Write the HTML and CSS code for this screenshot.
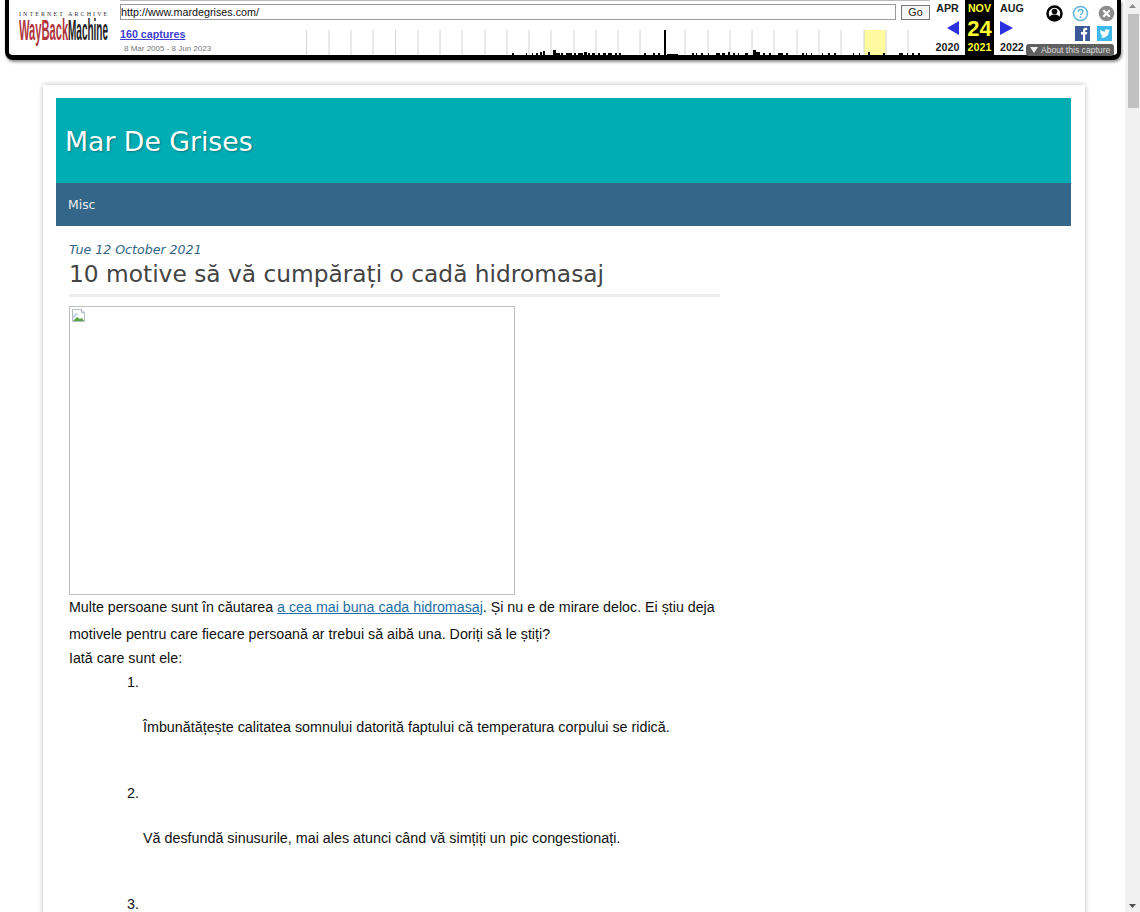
FILE: index.html
```html
<!DOCTYPE html>
<html lang="ro">
<head>
<meta charset="utf-8">
<title>Mar De Grises</title>
<link rel="stylesheet" href="styles.css">
</head>
<body>
<div class="window">
  <main class="page">
    <header class="wayback">
      <div class="brand">
        <div class="ia">INTERNET ARCHIVE</div>
        <div class="logo"><span class="logo-red">WayBack</span><span class="logo-black">Machine</span></div>
      </div>
      <div class="center">
        <div class="url-row">
          <div class="url">http://www.mardegrises.com/</div>
          <div class="go">Go</div>
        </div>
        <div class="graph-row">
          <div class="captures">
            <a class="cap-link">160 captures</a>
            <div class="cap-range">8 Mar 2005 - 8 Jun 2023</div>
          </div>
          <svg class="spark" width="630" height="27" viewBox="300 28 630 27">
            <rect class="spark-day" x="864" y="30" width="22" height="25"/>
            <path class="spark-tick" d="M306.500 30v25M329 30v25M351 30v25M373 30v25M395.500 30v25M418 30v25M440 30v25M462 30v25M485 30v25M507 30v25M529 30v25M551 30v25M574 30v25M596 30v25M618 30v25M640 30v25M685 30v25M708 30v25M730 30v25M752 30v25M774 30v25M797 30v25M819 30v25M841 30v25M864 30v25M886 30v25M908 30v25"/>
            <path class="spark-bar" d="M512 53h2v2h-2zM526 53h1v2h-1zM532 53h1v2h-1zM536 53h2v2h-2zM540 52h2v3h-2zM543 51h2v4h-2zM553 50h3v5h-3zM556 53h4v2h-4zM561 53h2v2h-2zM566 53h6v2h-6zM574 53h2v2h-2zM578 53h5v2h-5zM584 52h3v3h-3zM588 53h2v2h-2zM592 53h3v2h-3zM598 53h2v2h-2zM603 53h3v2h-3zM608 53h4v2h-4zM615 53h2v2h-2zM619 53h2v2h-2zM644 53h2v2h-2zM653 53h2v2h-2zM664 30h2v25h-2zM658 53h2v2h-2zM667 54h11v1h-11zM692 53h2v2h-2zM696 53h1v2h-1zM701 53h2v2h-2zM708 53h1v2h-1zM716 53h4v2h-4zM722 53h3v2h-3zM728 52h2v3h-2zM733 53h2v2h-2zM738 53h1v2h-1zM745 53h3v2h-3zM753 50h3v5h-3zM756 52h4v3h-4zM763 53h2v2h-2zM769 53h2v2h-2zM778 53h5v2h-5zM786 53h2v2h-2zM802 53h2v2h-2zM806 53h1v2h-1zM811 53h1v2h-1zM822 53h1v2h-1zM828 53h2v2h-2zM834 53h2v2h-2zM853 53h1v2h-1zM859 53h1v2h-1zM868 52h2v3h-2zM883 53h2v2h-2zM899 53h4v2h-4zM907 53h1v2h-1zM912 53h2v2h-2zM918 53h2v2h-2z"/>
          </svg>
        </div>
      </div>
      <nav class="months">
        <div class="mcol mprev">
          <div class="mname">APR</div>
          <div class="marrow"><svg width="12" height="14" viewBox="0 0 12 14"><path class="arrow" d="M12 0v14L0 7z"/></svg></div>
          <div class="myear">2020</div>
        </div>
        <div class="mcol mcur">
          <div class="mname">NOV</div>
          <div class="mday">24</div>
          <div class="myear">2021</div>
        </div>
        <div class="mcol mnext">
          <div class="mname">AUG</div>
          <div class="marrow"><svg width="13" height="14" viewBox="0 0 13 14"><path class="arrow" d="M0 0v14l13-7z"/></svg></div>
          <div class="myear">2022</div>
        </div>
      </nav>
      <div class="tools">
        <div class="tool-row tool-top">
          <svg width="17" height="17" viewBox="0 0 17 17"><circle cx="8.500" cy="8.500" r="7" fill="#fff" stroke="#000" stroke-width="2.500"/><circle cx="8.500" cy="6.500" r="2.800"/><path d="M3.500 13c.5-3 2.500-3.500 5-3.500s4.500.5 5 3.500c-1.500 1.500-3 2-5 2s-3.500-.5-5-2z"/></svg>
          <svg width="17" height="17" viewBox="0 0 17 17"><circle cx="8.500" cy="8.500" r="7" fill="#fff" stroke="#5fb6de" stroke-width="1.500"/><path d="M6.200 6.700c0-3 4.800-3 4.800 0 0 1.800-2.400 1.700-2.400 3.500" fill="none" stroke="#5fb6de" stroke-width="1.400"/><rect x="7.800" y="11.300" width="1.600" height="1.600" fill="#5fb6de"/></svg>
          <svg width="17" height="17" viewBox="0 0 17 17"><circle cx="8.500" cy="8.500" r="7.800" fill="#8c8c8c"/><path d="M5.300 5.300l6.400 6.400M11.700 5.300l-6.400 6.400" stroke="#fff" stroke-width="2.300"/></svg>
        </div>
        <div class="tool-row tool-social">
          <svg width="15" height="15" viewBox="0 0 15 15"><rect width="15" height="15" fill="#3b5998"/><path fill="#fff" d="M8 15V8.500H6V6h2V4.300C8 2.500 9 1.700 10.700 1.700h1.500v2.400h-1c-.8 0-1 .3-1 1V6h2l-.3 2.500h-1.700V15z"/></svg>
          <svg width="15" height="15" viewBox="0 0 15 15"><rect width="15" height="15" fill="#3cb8ea"/><path fill="#fff" d="M13 4.300c-.4.200-.8.300-1.200.3.400-.3.800-.7.900-1.200-.4.300-.9.400-1.400.5-.9-1-2.700-.8-3.300.4-.2.500-.3 1-.1 1.500-1.800-.1-3.300-1-4.400-2.300-.6 1-.3 2.300.6 2.900-.4 0-.7-.1-1-.3 0 1.100.8 2 1.800 2.300-.3.100-.6.100-.9 0 .3.900 1.100 1.500 2.100 1.500-.9.700-2 1-3.100.9 3.800 2.400 9-.1 8.900-5.700.4-.3.800-.7 1.100-1.200z"/></svg>
        </div>
      </div>
      <div class="about"><svg width="8" height="6" viewBox="0 0 8 6"><path fill="#eee" d="M0 0h8L4 6z"/></svg><span>About this capture</span></div>
    </header>

    <section class="card">
      <div class="site-head"><h1 class="site-title">Mar De Grises</h1></div>
      <div class="site-nav"><a class="nav-item">Misc</a></div>
      <article class="post">
        <div class="post-date">Tue 12 October 2021</div>
        <h2 class="post-title">10 motive să vă cumpărați o cadă hidromasaj</h2>
        <div class="broken">
          <svg width="16" height="16" viewBox="0 0 16 16"><path d="M1.500 1.500h9l3 3v9h-12z" fill="#fff" stroke="#b4bcc8"/><path d="M10.500 1.500v3h3" fill="#dfe6ef" stroke="#b4bcc8"/><path d="M2 13l4-4 3 2 2-1 2 3z" fill="#5aa64a"/><path d="M2 8l3-3 2 1-5 5z" fill="#bcd4f0"/></svg>
        </div>
        <p class="lead">Multe persoane sunt în căutarea <a class="link">a cea mai buna cada hidromasaj</a>. Și nu e de mirare deloc. Ei știu deja motivele pentru care fiecare persoană ar trebui să aibă una. Doriți să le știți?</p>
        <div class="line">Iată care sunt ele:</div>
        <ol class="reasons">
          <li><br><p>Îmbunătățește calitatea somnului datorită faptului că temperatura corpului se ridică.</p></li>
          <li><br><p>Vă desfundă sinusurile, mai ales atunci când vă simțiți un pic congestionați.</p></li>
          <li><br></li>
        </ol>
      </article>
    </section>
  </main>
  <aside class="scrollbar">
    <svg class="sb-arrow" width="15" height="14" viewBox="0 0 15 14"><path fill="#8a8a8a" d="M7.500 4l3.500 4H4z"/></svg>
    <div class="sb-thumb"></div>
    <div class="sb-rest"></div>
    <svg class="sb-arrow" width="15" height="14" viewBox="0 0 15 14"><path fill="#505050" d="M4 6h7l-3.500 4z"/></svg>
  </aside>
</div>
</body>
</html>
```

FILE: styles.css
```css
* { box-sizing: border-box; }
html, body { margin: 0; height: 100%; overflow: hidden; background: #fff; }
body { font-family: "Liberation Sans", Arial, sans-serif; font-size: 14.24px; color: #111; }
.window { display: flex; height: 912px; }
.page { width: 1125px; height: 912px; overflow: hidden; }
.scrollbar { width: 15px; background: #f1f1f1; display: flex; flex-direction: column; }
.sb-thumb { height: 94px; width: 11px; margin-left: 3px; background: #c1c1c1; flex: none; }
.sb-rest { flex: 1; }
.sb-arrow { flex: none; }

.wayback { position: relative; display: flex; width: 1116px; height: 60px; margin-left: 5px; background: #fff; border: 4px solid #000; border-top: 0; border-bottom-width: 5px; border-radius: 0 0 8px 8px; box-shadow: 1px 2px 3px rgba(0,0,0,.45); font-family: "Liberation Sans", Arial, sans-serif; color: #000; }
.brand { width: 111px; flex: none; padding: 11px 0 0 10px; }
.ia { width: 89px; font-family: "Liberation Serif", serif; font-size: 6px; line-height: 7px; letter-spacing: 2.08px; color: #333; white-space: nowrap; }
.logo { display: flex; width: 89px; height: 24px; font-weight: 700; font-size: 29px; line-height: 24px; white-space: nowrap; }
.logo-red { display: block; width: 49px; color: #b03840; transform: scaleX(.385); transform-origin: 0 50%; }
.logo-black { display: block; width: 40px; color: #222; transform: scaleX(.345); transform-origin: 0 50%; }

.center { width: 810px; flex: none; }
.url-row { display: flex; gap: 5px; padding-top: 4px; height: 21px; border-top: 1px solid #bbb; }
.url { width: 776px; height: 16px; margin-top: -1px; border: 1px solid #9a9a9a; font-size: 10.75px; line-height: 14px; padding-left: 0; color: #111; }
.go { width: 29px; height: 15px; border: 1px solid #777; background: #f6f6f6; font-size: 10.75px; line-height: 13px; text-align: center; color: #222; }
.graph-row { display: flex; height: 34px; }
.captures { width: 180px; flex: none; padding-top: 6px; }
.cap-link { display: block; font-size: 10.7px; line-height: 14px; font-weight: 700; color: #3b3fd0; text-decoration: underline; }
.cap-range { font-size: 8px; line-height: 10px; margin-top: 3px; padding-left: 4px; color: #767676; }
.spark { display: block; margin-top: 7px; flex: none; }
.spark-day { fill: #fdfaa0; }
.spark-tick { stroke: #d4d4d4; stroke-width: 1; fill: none; }
.spark-bar { fill: #000; }

.months { display: flex; margin-left: 3px; flex: none; }
.mcol { width: 32px; height: 55px; display: flex; flex-direction: column; align-items: center; font-weight: 700; font-size: 10.7px; color: #222; }
.mprev { padding-right: 3px; }
.mprev .marrow { margin-left: 11px; }
.mcur { width: 29px; background: #000; color: #ff3; }
.mnext { width: 36px; align-items: flex-start; padding-left: 6px; }
.mname { line-height: 13px; height: 19px; padding-top: 2px; }
.marrow { height: 21px; padding-top: 2px; line-height: 0; }
.mday { height: 21px; font-size: 22px; line-height: 19px; }
.myear { line-height: 13px; padding-top: 1px; }
.arrow { fill: #2d32e0; }

.tools { width: 88px; flex: none; padding: 5px 0 0 0; }
.tool-row { display: flex; }
.tool-top { gap: 9px; padding-left: 16px; }
.tool-social { gap: 7px; padding: 4px 0 0 45px; }
.about { position: absolute; left: 1017px; top: 44px; width: 88px; height: 12px; display: flex; align-items: center; gap: 3px; padding-left: 4px; background: #5f5f5f; border-radius: 3px; font-size: 8.6px; color: #ddd; white-space: nowrap; }

.card { width: 1042px; margin: 25px 0 0 43px; padding: 13px 14px 40px 13px; background: #fff; box-shadow: 0 0 5px rgba(0,0,0,.28); }
.site-head { height: 85px; background: #00adb2; padding: 25px 0 0 9px; }
.site-title { margin: 0; font-family: "DejaVu Sans", Verdana, sans-serif; font-weight: 400; font-size: 26.7px; line-height: 38px; color: #fff; text-shadow: 1px 1px 2px rgba(0,0,0,.3); }
.site-nav { height: 43px; background: #336688; padding: 0 0 0 12px; }
.nav-item { display: block; font-family: "DejaVu Sans", Verdana, sans-serif; font-size: 12.4px; line-height: 44px; color: #eee; }
.post { width: 651px; margin-left: 13px; padding-top: 16px; }
.post-date { font-family: "DejaVu Sans", Verdana, sans-serif; font-style: italic; font-size: 12.6px; line-height: 16px; color: #336688; }
.post-title { margin: 0; padding-top: 1px; height: 39px; border-bottom: 3px solid #eee; font-family: "DejaVu Sans", Verdana, sans-serif; font-weight: 400; font-size: 23.3px; line-height: 30px; color: #444; white-space: nowrap; }
.broken { width: 446px; height: 289px; margin-top: 9px; padding: 1px; border: 1px solid #c0c0c0; line-height: 0; }
.lead { margin: -1px 0 0; line-height: 27px; width: 651px; }
.link { color: #1f6ea5; text-decoration: underline; }
.line { line-height: 24px; margin-top: -2px; }
.reasons { margin: 0; padding: 0 0 0 74px; font-size: 14.32px; line-height: 24px; }
.reasons p { margin: 21px 0 42px; }
```
